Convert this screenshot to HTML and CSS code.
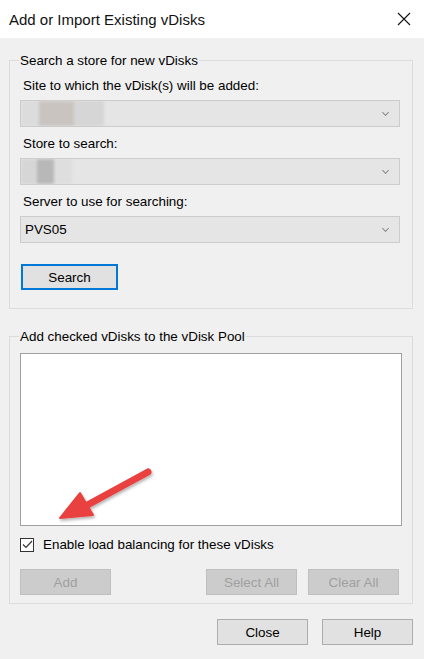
FILE: index.html
```html
<!DOCTYPE html>
<html>
<head>
    <title>Add or Import Existing vDisks</title>
    <link rel="stylesheet" href="styles.css">
</head>
<body>
    <div class="dialog">
        <div class="titlebar">
            <span class="title">Add or Import Existing vDisks</span>
            <svg class="close-x" width="14" height="14" viewBox="0 0 14 14">
                <path d="M1 1 L13 13 M13 1 L1 13" stroke="#111" stroke-width="1.1" fill="none"/>
            </svg>
        </div>

        <div class="content">
            <fieldset class="group group-search">
                <legend>Search a store for new vDisks</legend>

                <label class="field-label first">Site to which the vDisk(s) will be added:</label>
                <div class="combo">
                    <span class="blur blur-site"><i class="b1"></i><i class="b2"></i><i class="b3"></i></span>
                    <span class="chev"></span>
                </div>

                <label class="field-label">Store to search:</label>
                <div class="combo">
                    <span class="blur blur-store"><i class="b1"></i><i class="b2"></i><i class="b3"></i></span>
                    <span class="chev"></span>
                </div>

                <label class="field-label">Server to use for searching:</label>
                <div class="combo">
                    <span class="combo-value">PVS05</span>
                    <span class="chev"></span>
                </div>

                <button class="btn btn-default search-btn">Search</button>
            </fieldset>

            <fieldset class="group group-pool">
                <legend>Add checked vDisks to the vDisk Pool</legend>
                <div class="listbox"></div>

                <label class="check-row">
                    <span class="checkbox">
                        <svg width="11" height="9" viewBox="0 0 11 9">
                            <path d="M1 4.5 L4 7.5 L10 1" stroke="#333" stroke-width="1.2" fill="none"/>
                        </svg>
                    </span>
                    Enable load balancing for these vDisks
                </label>

                <div class="pool-buttons">
                    <button class="btn" disabled>Add</button>
                    <span class="spacer"></span>
                    <button class="btn" disabled>Select All</button>
                    <button class="btn" disabled>Clear All</button>
                </div>
            </fieldset>

            <div class="footer">
                <button class="btn">Close</button>
                <button class="btn">Help</button>
            </div>
        </div>

        <!-- annotation arrow laid over the screenshot -->
        <svg class="arrow" width="120" height="80" viewBox="0 0 120 80">
            <defs>
                <filter id="shadow" x="-20%" y="-20%" width="140%" height="140%">
                    <feDropShadow dx="1" dy="2" stdDeviation="1.5" flood-color="#000" flood-opacity="0.3"/>
                </filter>
            </defs>
            <g filter="url(#shadow)">
                <path d="M108 12 L40 49" stroke="#e9403f" stroke-width="7" stroke-linecap="round" fill="none"/>
                <path d="M20 58 L40 33 L53 55 Z" fill="#e9403f" stroke="#e9403f" stroke-width="2" stroke-linejoin="round"/>
            </g>
        </svg>
    </div>
</body>
</html>
```

FILE: styles.css
```css
body {
    margin: 0;
    background: #f0f0f0;
    font-family: "Liberation Sans", Arial, sans-serif;
    font-size: 13.4px;
    color: #000;
}
.dialog {
    position: relative;
    width: 424px;
    height: 659px;
    background: #f0f0f0;
}
.titlebar {
    height: 38px;
    background: #fff;
    display: flex;
    align-items: center;
    justify-content: space-between;
    padding: 0 13px 0 9px;
}
.title {
    font-size: 15px;
    color: #111;
}
.content {
    padding: 15px 11px 0 9px;
}
.group {
    margin: 0;
    padding: 0 10px 0 10px;
    border: 1px solid #dcdcdc;
    min-width: 0;
}
.group legend {
    padding: 0 1px;
    margin-left: -1px;
    font-size: 13.4px;
}
.group-search {
    padding-bottom: 18px;
}
.group-pool {
    margin-top: 20px;
    padding-bottom: 8px;
}
.field-label {
    display: block;
    margin: 9px 0 7px 3px;
}
.field-label.first {
    margin-top: 10px;
}
.combo {
    position: relative;
    height: 25px;
    margin-right: 2px;
    border: 1px solid #cccccc;
    background: #e5e5e5;
    display: flex;
    align-items: center;
    overflow: hidden;
}
.combo-value {
    padding-left: 4px;
}
.chev {
    position: absolute;
    right: 11px;
    top: 9px;
    width: 4px;
    height: 4px;
    border-right: 1px solid #8a8a8a;
    border-bottom: 1px solid #8a8a8a;
    transform: rotate(45deg);
}
.blur {
    display: flex;
    height: 100%;
    filter: blur(1.5px);
}
.blur i {
    display: block;
}
.blur-site .b1 { width: 18px; background: #dcdcdc; }
.blur-site .b2 { width: 35px; background: #c9c4c0; }
.blur-site .b3 { width: 30px; background: #d6d6d6; }
.blur-store .b1 { width: 16px; background: #d6d6d6; }
.blur-store .b2 { width: 17px; background: #b8b8b8; }
.blur-store .b3 { width: 18px; background: #dedede; }
.btn {
    font-family: inherit;
    font-size: 13.4px;
    width: 91px;
    height: 26px;
    padding: 0;
    background: #e1e1e1;
    border: 1px solid #adadad;
    color: #000;
}
.btn:disabled {
    background: #cccccc;
    border-color: #bfbfbf;
    color: #a0a0a0;
}
.btn-default {
    border: 2px solid #0078d7;
}
.search-btn {
    display: block;
    width: 97px;
    margin-top: 21px;
    margin-left: 1px;
}
.listbox {
    height: 171px;
    margin-top: 9px;
    background: #fff;
    border: 1px solid #a0a0a0;
}
.check-row {
    display: flex;
    align-items: center;
    gap: 9px;
    margin-top: 11px;
}
.checkbox {
    width: 12px;
    height: 12px;
    border: 1px solid #333;
    background: #fff;
    display: flex;
    align-items: center;
    justify-content: center;
}
.pool-buttons {
    display: flex;
    gap: 11px;
    margin-top: 17px;
    margin-right: 3px;
}
.pool-buttons .spacer {
    flex: 1;
}
.footer {
    display: flex;
    justify-content: flex-end;
    gap: 14px;
    margin-top: 15px;
}
.arrow {
    position: absolute;
    left: 40px;
    top: 460px;
}
```
